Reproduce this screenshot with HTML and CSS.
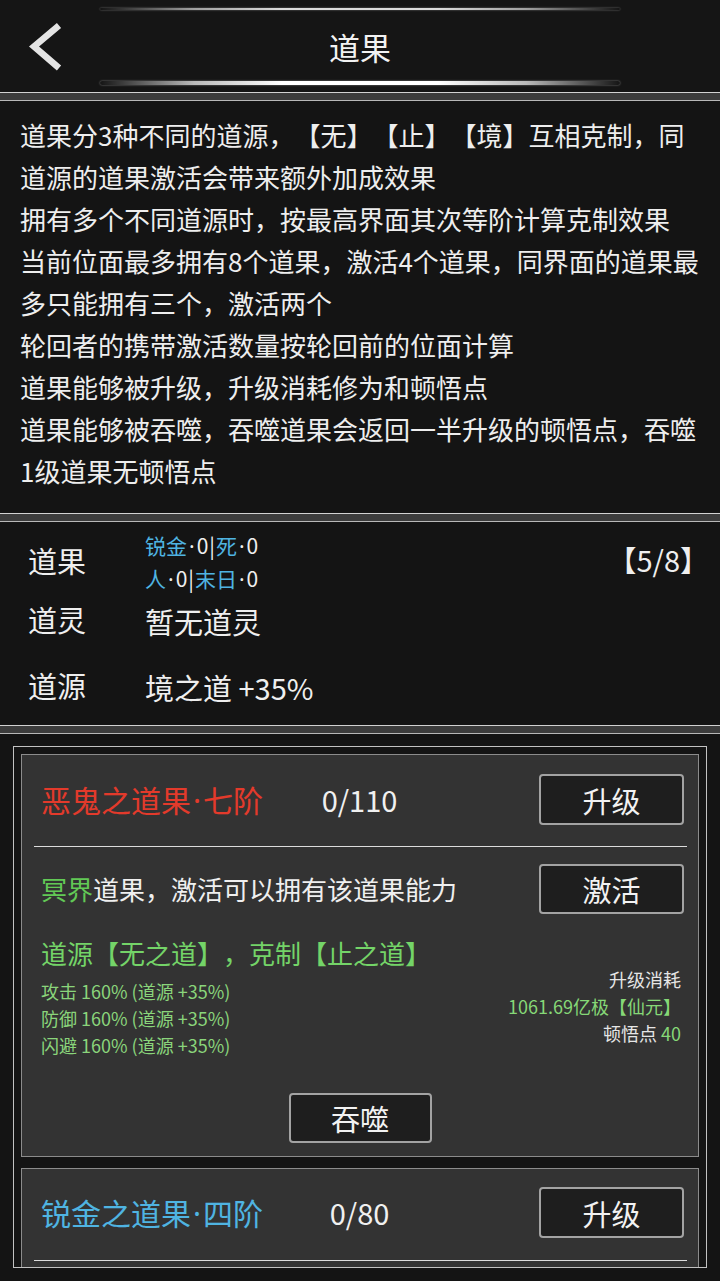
FILE: index.html
```html
<!DOCTYPE html>
<html lang="zh-CN">
<head>
<meta charset="utf-8">
<title>道果</title>
<link rel="stylesheet" href="styles.css">
</head>
<body>
<div class="header">
  <div class="glow glow-top"></div>
  <div class="titlebar">
    <svg class="back" viewBox="0 0 40 50" aria-hidden="true">
      <path d="M37 4.5 L12 25.5 L37 47" fill="none" stroke="#e4e4e4" stroke-width="6.5" stroke-linejoin="miter"/>
    </svg>
    <div class="title">道果</div>
    <div></div>
  </div>
  <div class="glow glow-bottom"></div>
</div>
<div class="sep"></div>
<div class="rules">
  <p>道果分3种不同的道源，【无】【止】【境】互相克制，同道源的道果激活会带来额外加成效果</p>
  <p>拥有多个不同道源时，按最高界面其次等阶计算克制效果</p>
  <p>当前位面最多拥有8个道果，激活4个道果，同界面的道果最多只能拥有三个，激活两个</p>
  <p>轮回者的携带激活数量按轮回前的位面计算</p>
  <p>道果能够被升级，升级消耗修为和顿悟点</p>
  <p>道果能够被吞噬，吞噬道果会返回一半升级的顿悟点，吞噬1级道果无顿悟点</p>
</div>
<div class="sep"></div>
<div class="summary">
  <div class="srow srow-1">
    <div class="slabel">道果</div>
    <div class="small">
      <div><span class="blue">锐金</span><span class="dot">·</span>0<span class="bar">|</span><span class="blue">死</span><span class="dot">·</span>0</div>
      <div><span class="blue">人</span><span class="dot">·</span>0<span class="bar">|</span><span class="blue">末日</span><span class="dot">·</span>0</div>
    </div>
    <div class="slots">【5/8】</div>
  </div>
  <div class="srow srow-2">
    <div class="slabel">道灵</div>
    <div class="svalue">暂无道灵</div>
  </div>
  <div class="srow srow-3">
    <div class="slabel">道源</div>
    <div class="svalue">境之道 +35%</div>
  </div>
</div>
<div class="sep"></div>
<div class="listpanel">
  <div class="frame">
    <div class="card">
      <div class="headrow">
        <div class="name red">恶鬼之道果<span class="dot">·</span>七阶</div>
        <div class="count">0/110</div>
        <div class="btn btn-end">升级</div>
      </div>
      <div class="divider"></div>
      <div class="actrow">
        <div class="desc"><span class="green">冥界</span>道果，激活可以拥有该道果能力</div>
        <div class="btn">激活</div>
      </div>
      <div class="source">道源【无之道】，克制【止之道】</div>
      <div class="statrow">
        <div class="attrs">
          <div>攻击 160% (道源 +35%)</div>
          <div>防御 160% (道源 +35%)</div>
          <div>闪避 160% (道源 +35%)</div>
        </div>
        <div class="cost">
          <div>升级消耗</div>
          <div class="green2">1061.69亿极【仙元】</div>
          <div>顿悟点 <span class="green2">40</span></div>
        </div>
      </div>
      <div class="btn btn-devour">吞噬</div>
    </div>
    <div class="card card-2">
      <div class="headrow">
        <div class="name blue">锐金之道果<span class="dot">·</span>四阶</div>
        <div class="count">0/80</div>
        <div class="btn btn-end">升级</div>
      </div>
      <div class="divider divider-2"></div>
    </div>
  </div>
</div>
</body>
</html>
```

FILE: styles.css
```css
* { box-sizing: border-box; }
html, body { margin: 0; padding: 0; }
body {
  width: 720px;
  height: 1281px;
  overflow: hidden;
  background: #141414;
  color: #efefef;
  font-family: "Noto Sans CJK SC", "Noto Sans", sans-serif;
  text-spacing-trim: space-all;
}

/* header */
.header {
  height: 92px;
  display: flex;
  flex-direction: column;
  padding: 7px 0 8px;
  background: #151515;
}
.glow {
  height: 3px;
  margin: 0 100px;
  border-radius: 2px;
  background: linear-gradient(90deg, rgba(255,255,255,0) 0%, rgba(255,255,255,0.7) 18%, #ffffff 35%, #ffffff 65%, rgba(255,255,255,0.7) 82%, rgba(255,255,255,0) 100%);
  box-shadow: 0 0 2px rgba(255,255,255,0.5);
}
.glow-top { height: 2px; margin-top: 1px; opacity: 0.85; }
.glow-bottom { height: 4px; margin-bottom: -1px; }
.titlebar {
  flex: 1;
  display: grid;
  grid-template-columns: 1fr auto 1fr;
  align-items: center;
}
.back { width: 40px; height: 50px; margin-left: 22px; display: block; }
.title { font-size: 31px; line-height: 1; color: #f2f2f2; padding-top: 2px; }

/* separator strips */
.sep {
  height: 9px;
  background: #3c3c3c;
  border-top: 1px solid #d2d2d2;
  border-bottom: 1px solid #b8b8b8;
}

/* rules panel */
.rules {
  height: 412px;
  padding: 13px 16px 0 20px;
  font-size: 26px;
  line-height: 42px;
  color: #eeeeee;
}
.rules p { margin: 0; }

/* summary panel */
.summary {
  height: 203px;
  padding: 7px 11px 0 28px;
}
.srow {
  display: grid;
  grid-template-columns: 117px 1fr auto;
  align-items: center;
}
.srow-1 { height: 64px; }
.srow-2 { height: 56px; }
.srow-3 { height: 76px; }
.slabel, .svalue, .slots { font-size: 29px; line-height: 1.2; color: #efefef; }
.slabel { padding-bottom: 4px; }
.slots { padding-bottom: 6px; }
.small { font-size: 21px; line-height: 32px; color: #efefef; }
.blue { color: #4fb4e2; }
.dot { font-family: "Noto Sans", "DejaVu Sans", sans-serif; padding: 0 2px; }
.bar { padding: 0 1px; }

/* list panel */
.listpanel {
  padding: 12px 13px 0 13px;
}
.frame {
  height: 522px;
  border: 1px solid #c2c2c2;
  padding: 7px 7px 0 7px;
  overflow: hidden;
  display: flex;
  flex-direction: column;
  gap: 11px;
}
.card {
  flex: none;
  background: #333333;
  border: 1px solid #8c8c8c;
  padding: 19px 14px 13px 19px;
  display: flex;
  flex-direction: column;
}
.card-2 { padding-top: 18px; padding-bottom: 20px; }
.headrow {
  display: grid;
  grid-template-columns: 1fr auto 1fr;
  align-items: center;
}
.name { font-size: 30px; line-height: 1.2; }
.red { color: #e33a2b; }
.count { font-size: 29px; line-height: 1.2; color: #f0f0f0; padding-right: 6px; }
.btn {
  width: 145px;
  height: 51px;
  background: #1e1e1e;
  border: 2px solid #a3a3a3;
  border-radius: 4px;
  display: flex;
  align-items: center;
  justify-content: center;
  font-size: 29px;
  color: #f2f2f2;
  flex: none;
}
.btn-end { justify-self: end; }
.divider {
  height: 1px;
  background: #dcdcdc;
  margin: 21px -3px 0 -7px;
}
.divider-2 { margin-top: 22px; }
.actrow {
  margin-top: 17px;
  display: flex;
  align-items: center;
  justify-content: space-between;
}
.actrow .btn { height: 50px; }
.desc { font-size: 26px; line-height: 1.2; color: #efefef; }
.green { color: #62c956; }
.green2 { color: #86d877; }
.source {
  margin-top: 21px;
  font-size: 26px;
  line-height: 36px;
  color: #74d468;
}
.statrow {
  margin-top: 7px;
  display: flex;
  justify-content: space-between;
  align-items: flex-start;
  font-size: 18px;
  line-height: 27px;
}
.attrs { color: #8ad57b; }
.cost { text-align: right; color: #e6e6e6; margin-top: -12px; margin-right: 3px; }
.btn-devour {
  width: 143px;
  height: 50px;
  margin-top: 34px;
  align-self: center;
  margin-right: 5px;
}
```
